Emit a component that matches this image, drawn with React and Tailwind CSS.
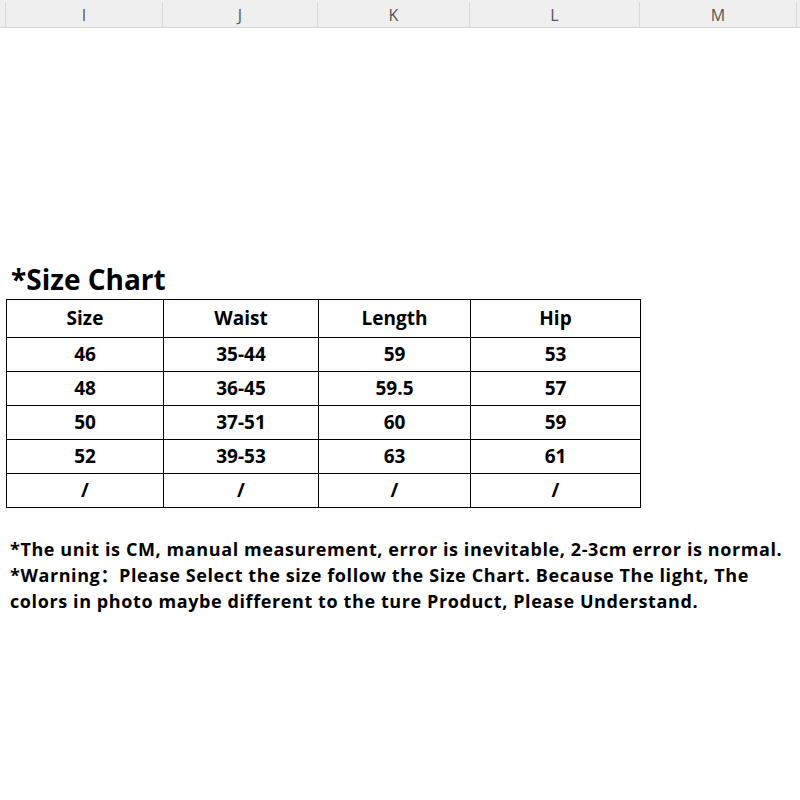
export default function App() {
  const cols = ["I", "J", "K", "L", "M"];
  const colW = ["w-[157px]", "w-[155px]", "w-[152px]", "w-[170px]", "w-[157px]"];
  const rows = [
    ["Size", "Waist", "Length", "Hip"],
    ["46", "35-44", "59", "53"],
    ["48", "36-45", "59.5", "57"],
    ["50", "37-51", "60", "59"],
    ["52", "39-53", "63", "61"],
    ["/", "/", "/", "/"],
  ];
  const tw = ["w-[157px]", "w-[155px]", "w-[152px]", "w-[170px]"];
  return (
    <div className="w-[800px] h-[800px] bg-white overflow-hidden" style={{ fontFamily: '"Open Sans", "Noto Sans CJK SC", sans-serif' }}>
      <div className="flex h-[28px] bg-[#efefef] border-b border-[#d6d6d6] pt-[2px]">
        <div className="w-[6px] border-r border-[#d9d9d9]" />
        {cols.map((c, i) => (
          <div key={c} className={`${colW[i]} flex items-center justify-center border-r border-[#d9d9d9] text-[16px] text-[#555] font-normal`}>
            {c}
          </div>
        ))}
      </div>
      <div className="h-[234px]" />
      <div className="pl-[11px] text-[28px] leading-[34px] font-bold text-black h-[37px]">*Size Chart</div>
      <div className="pl-[6px]">
        <table className="border-collapse text-[19px] font-bold text-black">
          <tbody>
            {rows.map((r, ri) => (
              <tr key={ri} className={ri === 0 ? "h-[38px]" : "h-[34px]"}>
                {r.map((v, ci) => (
                  <td key={ci} className={`${tw[ci]} border border-black text-center p-0 leading-none`}>
                    {v}
                  </td>
                ))}
              </tr>
            ))}
          </tbody>
        </table>
      </div>
      <div className="pl-[10px] pt-[28px] text-[18px] leading-[26px] font-bold text-black tracking-[0.6px]">
        <div>*The unit is CM, manual measurement, error is inevitable, 2-3cm error is normal.</div>
        <div>*Warning：Please Select the size follow the Size Chart. Because The light, The</div>
        <div>colors in photo maybe different to the ture Product, Please Understand.</div>
      </div>
    </div>
  );
}
